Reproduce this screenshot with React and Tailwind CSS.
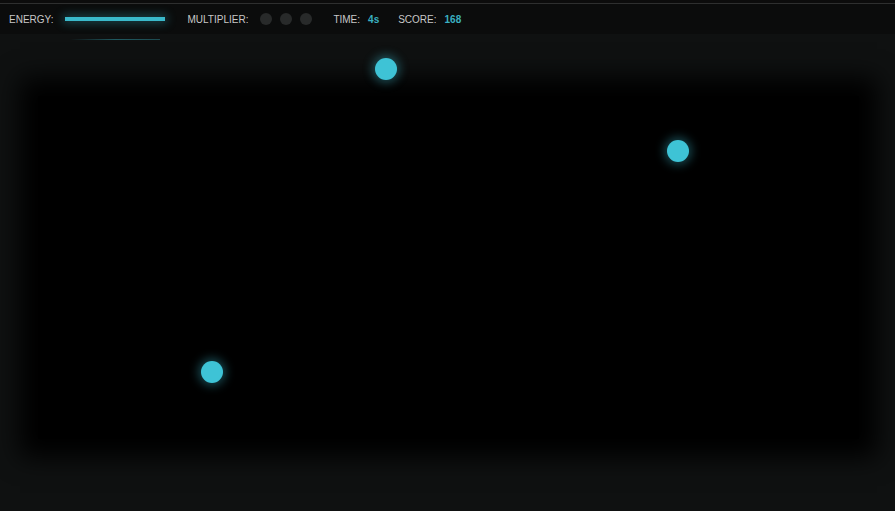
import React from "react";

const balls = [
    { x: 386, y: 69 },
    { x: 678, y: 151 },
    { x: 212, y: 372 },
];

export default function App() {
    return (
        <div
            className="w-[895px] h-[511px] bg-[#0f1111] flex flex-col overflow-hidden"
            style={{ fontFamily: '"Liberation Sans", Arial, sans-serif' }}
        >
            {/* top rule */}
            <div className="h-[3px] bg-[#0c0c0c]" />
            <div className="h-px bg-[#2e2f2f]" />

            {/* hud */}
            <div className="h-[30px] bg-[#0b0c0c] flex items-center pl-[9px] text-[10px] text-[#c8c8c8] relative z-10">
                <span>ENERGY:</span>
                <div className="ml-[12px] w-[100px] h-[4px] bg-[#3ab9ca] shadow-[0_0_10px_2px_rgba(58,185,202,0.35)]" />
                <span className="ml-[22px]">MULTIPLIER:</span>
                <div className="ml-[12px] flex gap-[8px]">
                    <div className="w-[12px] h-[12px] rounded-full bg-[#282a2a]" />
                    <div className="w-[12px] h-[12px] rounded-full bg-[#282a2a]" />
                    <div className="w-[12px] h-[12px] rounded-full bg-[#282a2a]" />
                </div>
                <span className="ml-[21px]">TIME:</span>
                <span className="ml-[8px] text-[#3ab0c0] font-bold">4s</span>
                <span className="ml-[19px]">SCORE:</span>
                <span className="ml-[8px] text-[#3ab0c0] font-bold">168</span>
            </div>

            {/* play field */}
            <div className="flex-1 relative">
                <div className="absolute left-[70px] top-[5px] w-[90px] h-px bg-gradient-to-r from-transparent via-[#1f5960] to-[#1d4a50]" />
                <div className="absolute left-[38px] right-[36px] top-[62px] bottom-[72px] bg-black shadow-[0_0_24px_18px_#000]" />
                {balls.map((b, i) => (
                    <div
                        key={i}
                        className="absolute w-[22px] h-[22px] rounded-full bg-[#3ec3d6] shadow-[0_0_10px_3px_rgba(62,195,214,0.35)]"
                        style={{ left: b.x - 11, top: b.y - 11 - 34 }}
                    />
                ))}
            </div>
        </div>
    );
}
